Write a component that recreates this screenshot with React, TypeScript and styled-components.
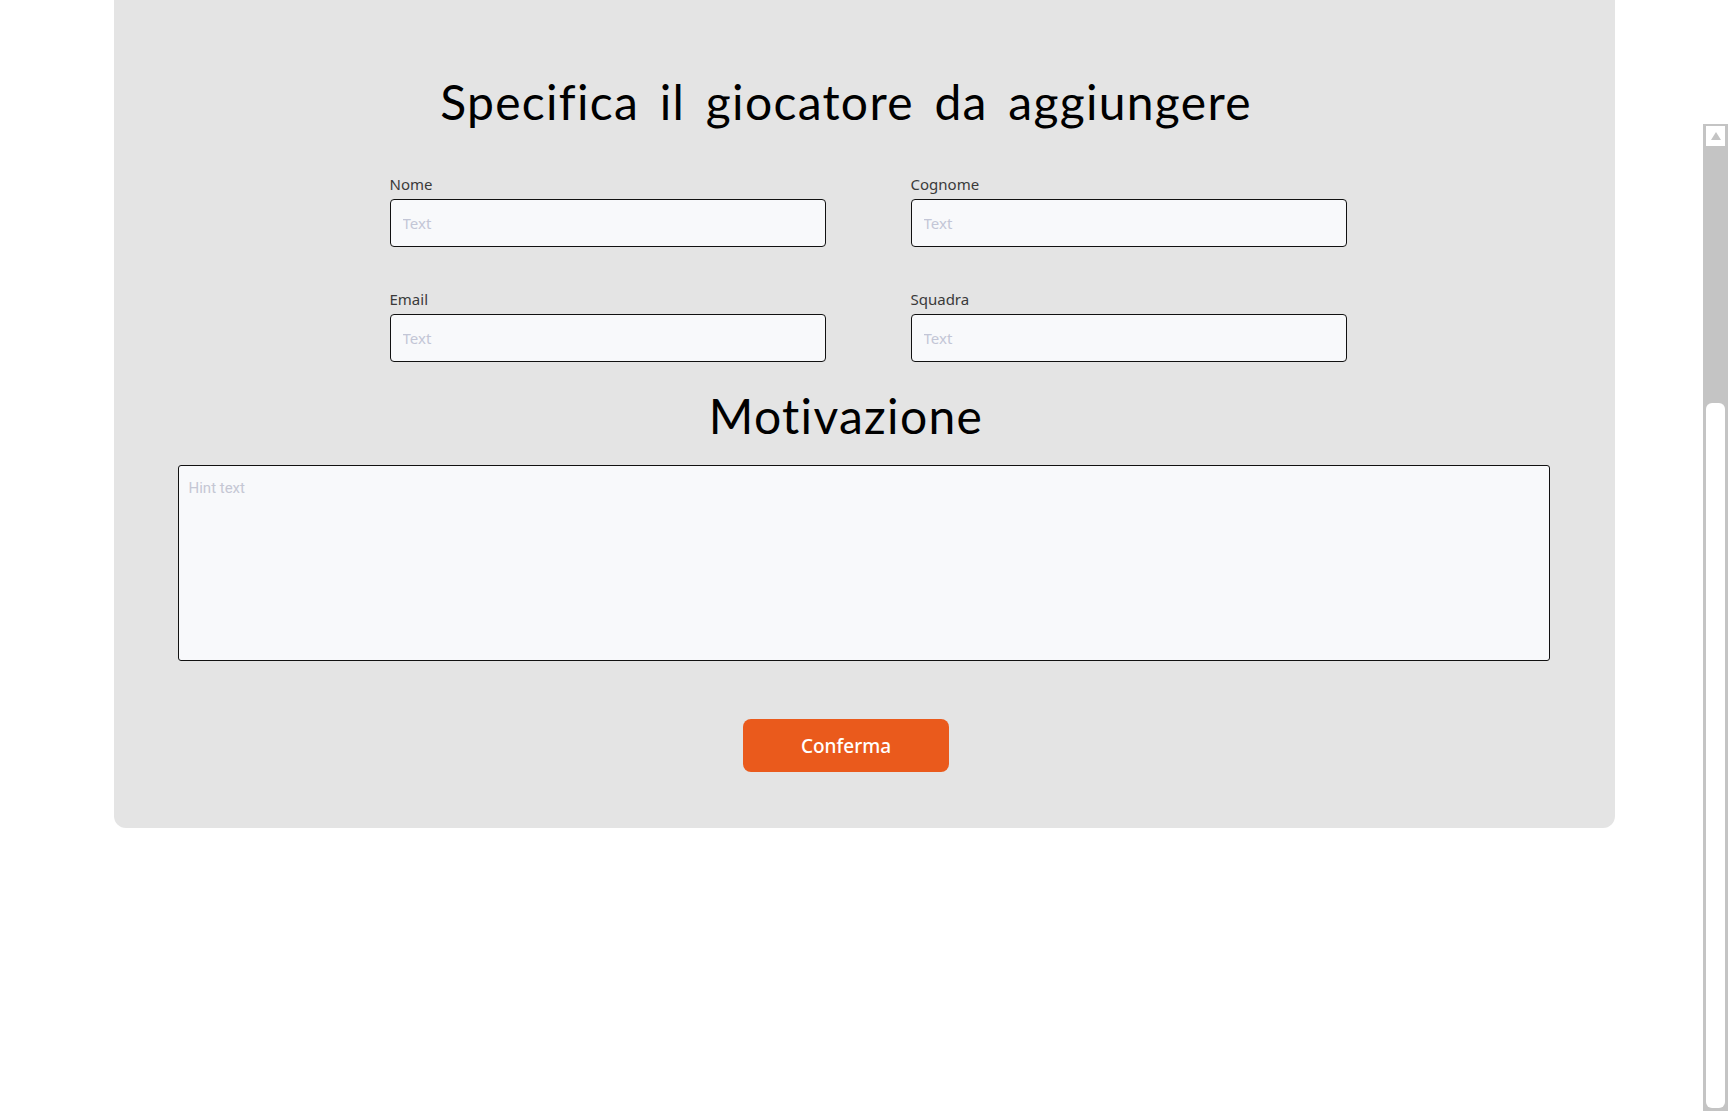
import { FC } from "react";
import styled, { createGlobalStyle } from "styled-components";

const GlobalStyle = createGlobalStyle`
  html, body {
    margin: 0;
    padding: 0;
    background: #ffffff;
  }
  * {
    box-sizing: border-box;
  }
`;

interface FieldProps {
  label: string;
}

const Field: FC<FieldProps> = ({ label }) => (
  <FieldStyled>
    <LabelStyled>{label}</LabelStyled>
    <InputStyled placeholder='Text' />
  </FieldStyled>
);

const App: FC = () => {
  const fields = ["Nome", "Cognome", "Email", "Squadra"];

  return (
    <>
      <GlobalStyle />
      <PageStyled>
        <PanelStyled>
          <HeadingStyled $top={73}>Specifica il giocatore da aggiungere</HeadingStyled>
          <FieldsGridStyled>
            {fields.map((f) => (
              <Field key={f} label={f} />
            ))}
          </FieldsGridStyled>
          <HeadingStyled $top={25}>Motivazione</HeadingStyled>
          <TextAreaStyled placeholder='Hint text' />
          <ButtonRowStyled>
            <ConfirmButton type='button'>Conferma</ConfirmButton>
          </ButtonRowStyled>
        </PanelStyled>
      </PageStyled>
      <ScrollbarStyled>
        <ScrollArrowStyled>
          <svg width='12' height='10' viewBox='0 0 12 10'>
            <path d='M6 1 L11 9 L1 9 Z' fill='#c4c4c4' />
          </svg>
        </ScrollArrowStyled>
        <ScrollThumbStyled />
      </ScrollbarStyled>
    </>
  );
};

const PageStyled = styled.div`
  width: 1501px;
  margin: 0 auto;
`;

const PanelStyled = styled.div`
  display: flex;
  flex-direction: column;
  background: #e4e4e4;
  border-radius: 0 0 12px 12px;
  padding: 0 65px 56px 64px;
`;

const HeadingStyled = styled.h1<{ $top: number }>`
  margin: ${(p) => p.$top}px 35px 0 0;
  font-family: Lato, "Noto Sans", sans-serif;
  font-weight: 400;
  font-size: 48px;
  line-height: 58px;
  color: #000;
  text-align: center;
  word-spacing: 7px;
  letter-spacing: 1.3px;
`;

const FieldsGridStyled = styled.div`
  display: grid;
  grid-template-columns: 436px 436px;
  column-gap: 85px;
  row-gap: 42px;
  margin: 43px 0 0 212px;
`;

const FieldStyled = styled.div`
  display: flex;
  flex-direction: column;
  gap: 5px;
`;

const LabelStyled = styled.label`
  font-family: "Noto Sans", sans-serif;
  font-size: 15px;
  line-height: 20px;
  color: #3a3a3a;
`;

const InputStyled = styled.input`
  height: 48px;
  width: 100%;
  padding: 0 12px;
  border: 1px solid #111;
  border-radius: 4px;
  background: #f8f9fb;
  font-family: "Noto Sans", sans-serif;
  font-size: 15px;
  outline: none;

  &::placeholder {
    color: #c3c6d6;
  }
`;

const TextAreaStyled = styled.textarea`
  margin-top: 20px;
  height: 196px;
  width: 100%;
  padding: 13px 10px;
  border: 1px solid #111;
  border-radius: 3px;
  background: #f8f9fb;
  font-family: Roboto, sans-serif;
  font-size: 15px;
  resize: none;
  outline: none;

  &::placeholder {
    color: #c5c7d4;
  }
`;

const ButtonRowStyled = styled.div`
  display: flex;
  justify-content: center;
  margin: 58px 35px 0 0;
`;

const ConfirmButton = styled.button`
  width: 206px;
  height: 53px;
  border: none;
  border-radius: 8px;
  background: #ea5a1c;
  color: #fff;
  font-family: "Noto Sans", sans-serif;
  font-weight: 500;
  font-size: 19px;
  cursor: pointer;
`;

const ScrollbarStyled = styled.div`
  position: fixed;
  top: 124px;
  right: 0;
  width: 25px;
  height: 987px;
  background: #c4c4c4;
  display: flex;
  flex-direction: column;
  align-items: center;
  padding: 2px 0 3px;
`;

const ScrollArrowStyled = styled.div`
  width: 19px;
  height: 20px;
  background: #fff;
  display: flex;
  align-items: center;
  justify-content: center;
`;

const ScrollThumbStyled = styled.div`
  margin-top: auto;
  width: 19px;
  height: 705px;
  background: #fff;
  border-radius: 6px;
`;

export default App;
